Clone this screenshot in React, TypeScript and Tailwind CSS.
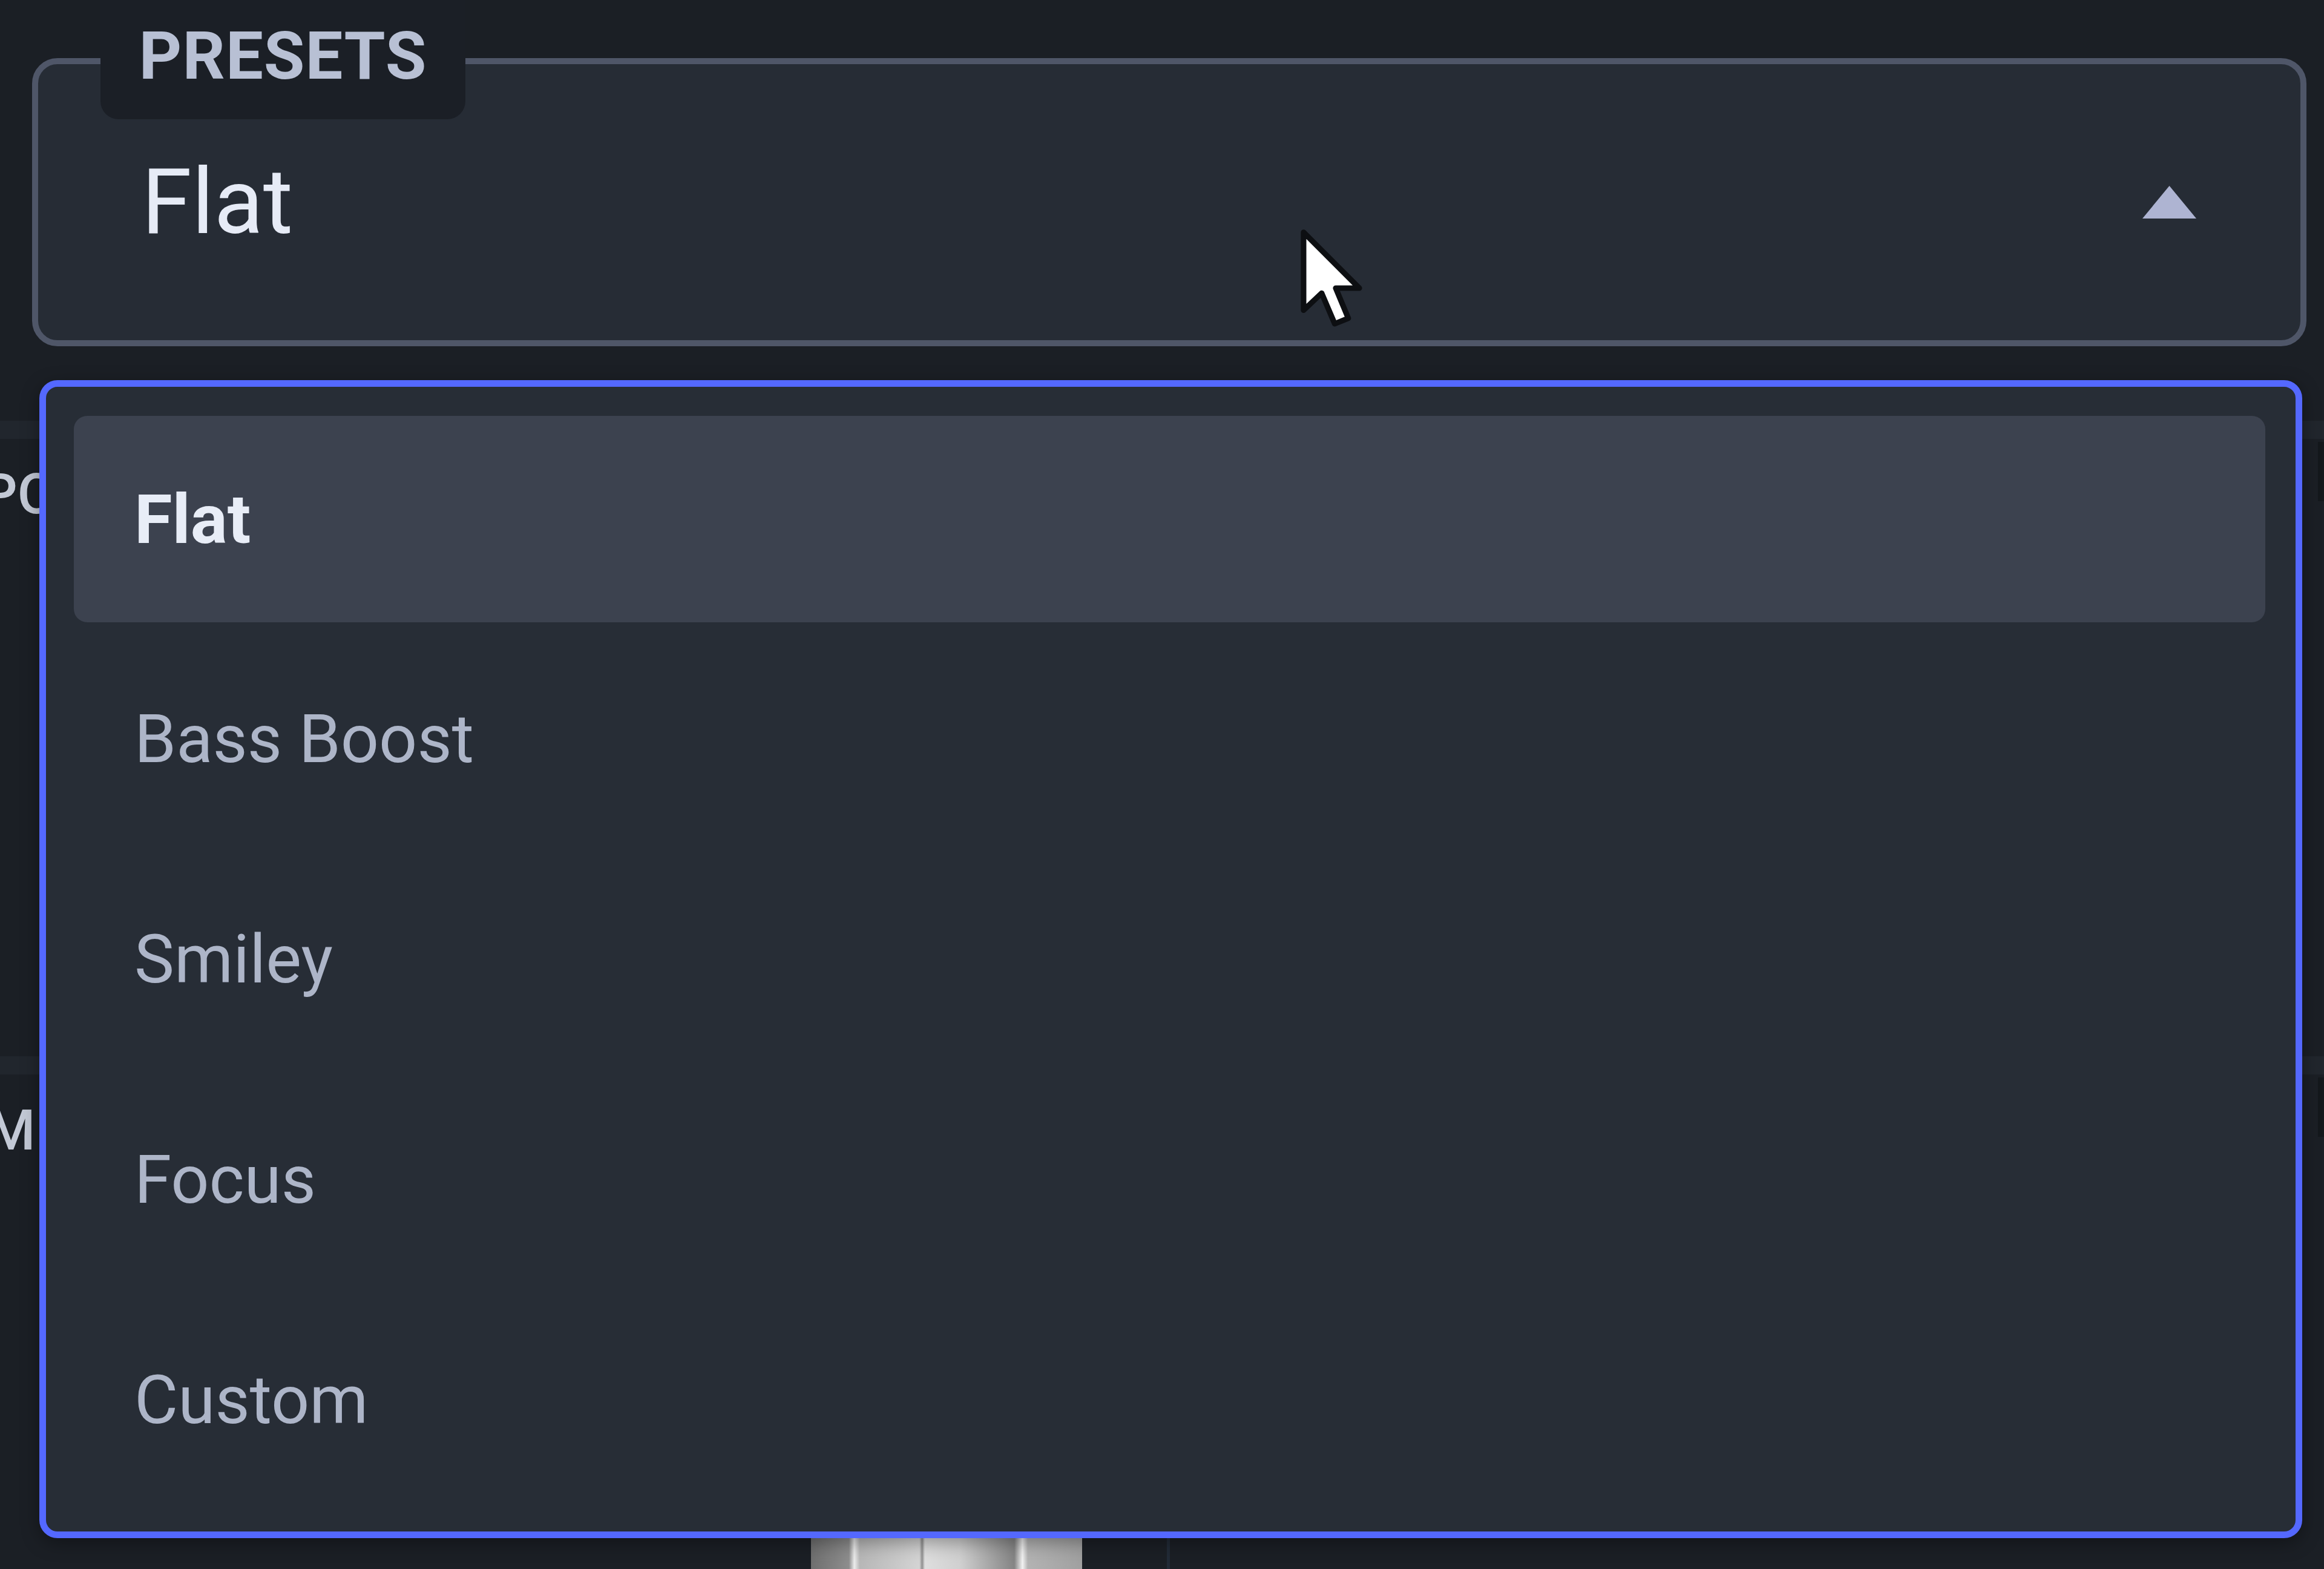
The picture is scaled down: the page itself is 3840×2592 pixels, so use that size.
import React from "react";

const items = ["Flat", "Bass Boost", "Smiley", "Focus", "Custom"];

function Cursor() {
  return (
    <svg width="104" height="166" viewBox="0 0 12.5 20" className="block">
      <path
        d="M0.7 0.7 L0.7 16.2 L4.3 12.8 L6.9 18.9 L9.6 17.8 L7.1 11.8 L11.8 11.8 Z"
        fill="#ffffff"
        stroke="#0d0f12"
        strokeWidth="1.1"
        strokeLinejoin="round"
      />
    </svg>
  );
}

export default function App() {
  return (
    <div className="relative w-[3840px] h-[2592px] overflow-hidden bg-[#1b1f25] font-['Roboto','Inter',sans-serif]">
      {/* Header with select */}
      <div className="pl-[53px] pr-[29px] pt-[96px]">
        <div className="relative h-[476px] rounded-[42px] border-[10px] border-[#4f5668] bg-[#262c35] flex items-center justify-between pl-[171px] pr-[170px]">
          <div className="absolute left-[103px] top-[-106px] w-[603px] h-[197px] rounded-b-[30px] bg-[#1b1f26] flex justify-center pt-[38px]">
            <span className="text-[110px] leading-[110px] font-bold text-[#b8c0d4] tracking-[1px]">
              PRESETS
            </span>
          </div>
          <span className="text-[150px] leading-[150px] text-[#e6ebf6] font-normal">Flat</span>
          <svg width="93" height="58" viewBox="0 0 93 58" className="block">
            <polygon points="46.5,2 91,56 2,56" fill="#aeb4d2" />
          </svg>
        </div>
      </div>

      {/* Background sections (mostly covered by the dropdown) */}
      <div className="mt-[123px] border-t-[30px] border-[#21262d] h-[1050px] flex justify-between">
        <span className="ml-[-30px] mt-[46px] text-[92px] leading-[92px] font-medium text-[#c3c9d6] h-fit">
          POST
        </span>
        <div className="w-[10px] h-[98px] mt-[5px] bg-[#14181c]" />
      </div>
      <div className="border-t-[30px] border-[#21262d] h-[773px] flex justify-between">
        <span className="ml-[-22px] mt-[47px] text-[92px] leading-[92px] font-medium text-[#c3c9d6] h-fit">
          MIX
        </span>
        <div className="w-[10px] h-[98px] mt-[5px] bg-[#14181c]" />
      </div>
      <div className="flex items-start h-[100px] ml-[1340px]">
        <div className="w-[448px] h-[100px] rounded-t-[14px] bg-[linear-gradient(90deg,#6f6f6f_0%,#8d8d8d_14%,#ececec_16%,#b7b7b7_18%,#c6c6c6_30%,#d4d4d4_40%,#8f8f8f_41%,#dedede_42%,#d0d0d0_55%,#bdbdbd_60%,#848484_75%,#f2f2f2_78%,#b3b3b3_80%,#a0a0a0_100%)]" />
        <div className="ml-[140px] w-[5px] h-[100px] bg-[#222b37]" />
      </div>

      {/* Dropdown menu overlay */}
      <div className="absolute left-[65px] top-[628px] w-[3739px] h-[1913px] rounded-[30px] border-[11px] border-[#5468ff] bg-[#272d36] shadow-[0_8px_30px_rgba(0,0,0,0.35)] pl-[46px] pr-[50px] pt-[48px] flex flex-col gap-[23px]">
        {items.map((it, i) => (
          <div
            key={it}
            className={
              i === 0
                ? "h-[341px] shrink-0 rounded-[22px] bg-[#3c424f] flex items-center pl-[100px]"
                : "h-[341px] shrink-0 rounded-[22px] flex items-center pl-[100px]"
            }
          >
            <span
              className={
                i === 0
                  ? "text-[114px] leading-[114px] font-bold text-[#e8edf7]"
                  : "text-[111px] leading-[111px] font-normal text-[#adb5c8]"
              }
            >
              {it}
            </span>
          </div>
        ))}
      </div>

      {/* Mouse pointer */}
      <div className="absolute left-[2148px] top-[378px]">
        <Cursor />
      </div>
    </div>
  );
}
